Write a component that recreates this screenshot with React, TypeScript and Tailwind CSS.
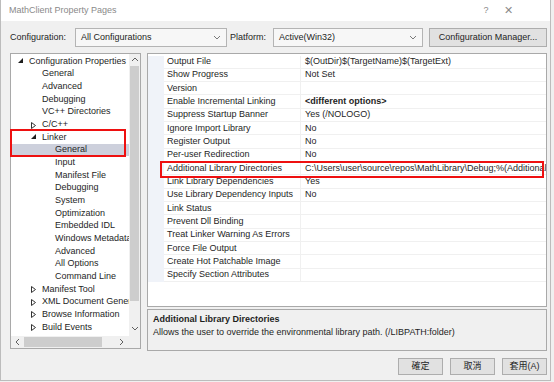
import type { FC } from 'react';

type TreeNode = {
  label: string;
  level: 0 | 1 | 2;
  expander?: 'open' | 'closed';
  selected?: boolean;
};

const treeNodes: TreeNode[] = [
  { label: 'Configuration Properties', level: 0, expander: 'open' },
  { label: 'General', level: 1 },
  { label: 'Advanced', level: 1 },
  { label: 'Debugging', level: 1 },
  { label: 'VC++ Directories', level: 1 },
  { label: 'C/C++', level: 1, expander: 'closed' },
  { label: 'Linker', level: 1, expander: 'open' },
  { label: 'General', level: 2, selected: true },
  { label: 'Input', level: 2 },
  { label: 'Manifest File', level: 2 },
  { label: 'Debugging', level: 2 },
  { label: 'System', level: 2 },
  { label: 'Optimization', level: 2 },
  { label: 'Embedded IDL', level: 2 },
  { label: 'Windows Metadata', level: 2 },
  { label: 'Advanced', level: 2 },
  { label: 'All Options', level: 2 },
  { label: 'Command Line', level: 2 },
  { label: 'Manifest Tool', level: 1, expander: 'closed' },
  { label: 'XML Document Generator', level: 1, expander: 'closed' },
  { label: 'Browse Information', level: 1, expander: 'closed' },
  { label: 'Build Events', level: 1, expander: 'closed' },
];

const indentClass: Record<number, string> = {
  0: 'pl-[18px]',
  1: 'pl-[31px]',
  2: 'pl-[44px]',
};

const properties: { name: string; value: string; bold?: boolean }[] = [
  { name: 'Output File', value: '$(OutDir)$(TargetName)$(TargetExt)' },
  { name: 'Show Progress', value: 'Not Set' },
  { name: 'Version', value: '' },
  { name: 'Enable Incremental Linking', value: '<different options>', bold: true },
  { name: 'Suppress Startup Banner', value: 'Yes (/NOLOGO)' },
  { name: 'Ignore Import Library', value: 'No' },
  { name: 'Register Output', value: 'No' },
  { name: 'Per-user Redirection', value: 'No' },
  {
    name: 'Additional Library Directories',
    value: 'C:\\Users\\user\\source\\repos\\MathLibrary\\Debug;%(AdditionalLibraryDirectories)',
  },
  { name: 'Link Library Dependencies', value: 'Yes' },
  { name: 'Use Library Dependency Inputs', value: 'No' },
  { name: 'Link Status', value: '' },
  { name: 'Prevent Dll Binding', value: '' },
  { name: 'Treat Linker Warning As Errors', value: '' },
  { name: 'Force File Output', value: '' },
  { name: 'Create Hot Patchable Image', value: '' },
  { name: 'Specify Section Attributes', value: '' },
];

const OpenArrow: FC = () => (
  <svg width="5" height="5" viewBox="0 0 5 5" className="block">
    <path d="M5 0 L5 5 L0 5 Z" fill="#1e1e1e" />
  </svg>
);

const ClosedArrow: FC = () => (
  <svg width="5" height="7" viewBox="0 0 5 7" className="block">
    <path d="M0.5 0.5 L4.5 3.5 L0.5 6.5 Z" fill="none" stroke="#333" strokeWidth="1" />
  </svg>
);

const Chevron: FC<{ dir: 'up' | 'down' | 'left' | 'right'; color?: string }> = ({ dir, color = '#606060' }) => {
  const d = {
    up: 'M1 5 L4 2 L7 5',
    down: 'M1 2 L4 5 L7 2',
    left: 'M5 1 L2 4 L5 7',
    right: 'M2 1 L5 4 L2 7',
  }[dir];
  return (
    <svg width="8" height="8" viewBox="0 0 8 8" className="block">
      <path d={d} fill="none" stroke={color} strokeWidth="1" />
    </svg>
  );
};

const ComboBox: FC<{ value: string; width: string }> = ({ value, width }) => (
  <div
    className={`${width} h-[19px] flex items-center justify-between border border-[#b4b4b4] bg-[#f7f7f7] pl-[5px] pr-[5px]`}
  >
    <span>{value}</span>
    <Chevron dir="down" color="#7a7a7a" />
  </div>
);

const DialogButton: FC<{ label: string }> = ({ label }) => (
  <div className="w-[45px] h-[17px] flex items-center justify-center border border-[#adadad] bg-[#e1e1e1] text-[9px] font-['Liberation_Sans','Noto_Sans_CJK_TC',sans-serif]">
    {label}
  </div>
);

const TreePanel: FC = () => (
  <div className="relative w-[131px] h-[296px] border border-[#a9a9a9] bg-white flex flex-col">
    <div className="flex flex-1 min-h-0">
      <div className="flex-1 overflow-hidden pt-[1px]">
        {treeNodes.map((node, i) => (
          <div
            key={i}
            className={`h-[12.67px] flex items-center whitespace-nowrap ${indentClass[node.level]} ${
              node.selected ? 'bg-[#cdd0dc]' : ''
            }`}
          >
            <span className="w-0 relative">
              {node.expander && (
                <span className="absolute right-[6px] -top-[3px]">
                  {node.expander === 'open' ? <OpenArrow /> : <ClosedArrow />}
                </span>
              )}
            </span>
            <span>{node.label}</span>
          </div>
        ))}
      </div>
      {/* vertical scrollbar */}
      <div className="w-[11px] bg-[#f0f0f0] flex flex-col items-center">
        <div className="h-[12px] flex items-center justify-center">
          <Chevron dir="up" />
        </div>
        <div className="w-[9px] h-[235px] bg-[#cdcdcd]" />
        <div className="flex-1" />
        <div className="h-[12px] flex items-center justify-center mb-[1px]">
          <Chevron dir="down" />
        </div>
      </div>
    </div>
    {/* horizontal scrollbar */}
    <div className="h-[12px] flex bg-[#f0f0f0]">
      <div className="w-[13px] flex items-center justify-center">
        <Chevron dir="left" />
      </div>
      <div className="w-[78px] h-[10px] mt-[1px] bg-[#cdcdcd]" />
      <div className="flex-1 flex items-center justify-end pr-[3px]">
        <Chevron dir="right" />
      </div>
      <div className="w-[11px] bg-[#f0f0f0]" />
    </div>

    {/* highlight drawn over Linker > General */}
    <div className="absolute left-[-1px] top-[75px] w-[116px] h-[28px] border-2 border-[#ee1010] pointer-events-none" />
  </div>
);

const PropertyGrid: FC = () => (
  <div className="relative w-[400px] h-[254px] border border-[#a9a9a9] bg-white overflow-hidden pt-[1.5px]">
    {properties.map((p, i) => (
      <div key={i} className="h-[13.33px] flex">
        <div className="w-[16px] bg-[#f0f3f9]" />
        <div className="w-[137px] border-b border-r border-[#f0f0f0] flex items-center pl-[3px] whitespace-nowrap">
          {p.name}
        </div>
        <div
          className={`flex-1 border-b border-[#f0f0f0] flex items-center pl-[4px] whitespace-nowrap overflow-hidden ${
            p.bold ? 'font-bold' : ''
          }`}
        >
          {p.value}
        </div>
      </div>
    ))}

    {/* highlight drawn over Additional Library Directories */}
    <div className="absolute left-[12px] top-[107px] w-[384px] h-[17px] border-[2.5px] border-[#ee1010] pointer-events-none" />
  </div>
);

export default function App() {
  return (
    <div className="w-[554px] h-[382px] bg-[#f0f0f0] overflow-hidden text-[9px] leading-none text-[#1e1e1e] font-['Liberation_Sans',sans-serif]">
      <div className="w-[551px] h-[381px] border-r border-b border-l border-[#bcbcbc] flex flex-col">
        {/* Title bar */}
        <div className="h-[21px] bg-white flex items-center pl-[8px] text-[#8a8a8a]">
          <span className="flex-1">MathClient Property Pages</span>
          <span className="w-[22px] text-center">?</span>
          <span className="w-[22px] mr-[31px] text-center text-[11px]">✕</span>
        </div>

        {/* Configuration row */}
        <div className="mt-[7px] h-[19px] flex items-center pl-[9px]">
          <span className="w-[65px]">Configuration:</span>
          <ComboBox value="All Configurations" width="w-[152px]" />
          <span className="ml-[3px] w-[43px]">Platform:</span>
          <ComboBox value="Active(Win32)" width="w-[150px]" />
          <div className="ml-[6px] w-[118px] h-[19px] flex items-center justify-center border border-[#adadad] bg-[#e1e1e1]">
            Configuration Manager...
          </div>
        </div>

        {/* Main area */}
        <div className="mt-[6px] flex pl-[9px] gap-[6px]">
          <TreePanel />
          <div className="flex flex-col">
            <PropertyGrid />
            <div className="mt-[2px] w-[400px] h-[42px] border border-[#a9a9a9] bg-[#f0f0f0] px-[5px] pt-[3px]">
              <div className="font-bold h-[13px] flex items-center">Additional Library Directories</div>
              <div className="h-[13px] flex items-center">
                Allows the user to override the environmental library path. (/LIBPATH:folder)
              </div>
            </div>
            <div className="mt-[7px] flex justify-end gap-[7px]">
              <DialogButton label="確定" />
              <DialogButton label="取消" />
              <DialogButton label="套用(A)" />
            </div>
          </div>
        </div>
      </div>
    </div>
  );
}
